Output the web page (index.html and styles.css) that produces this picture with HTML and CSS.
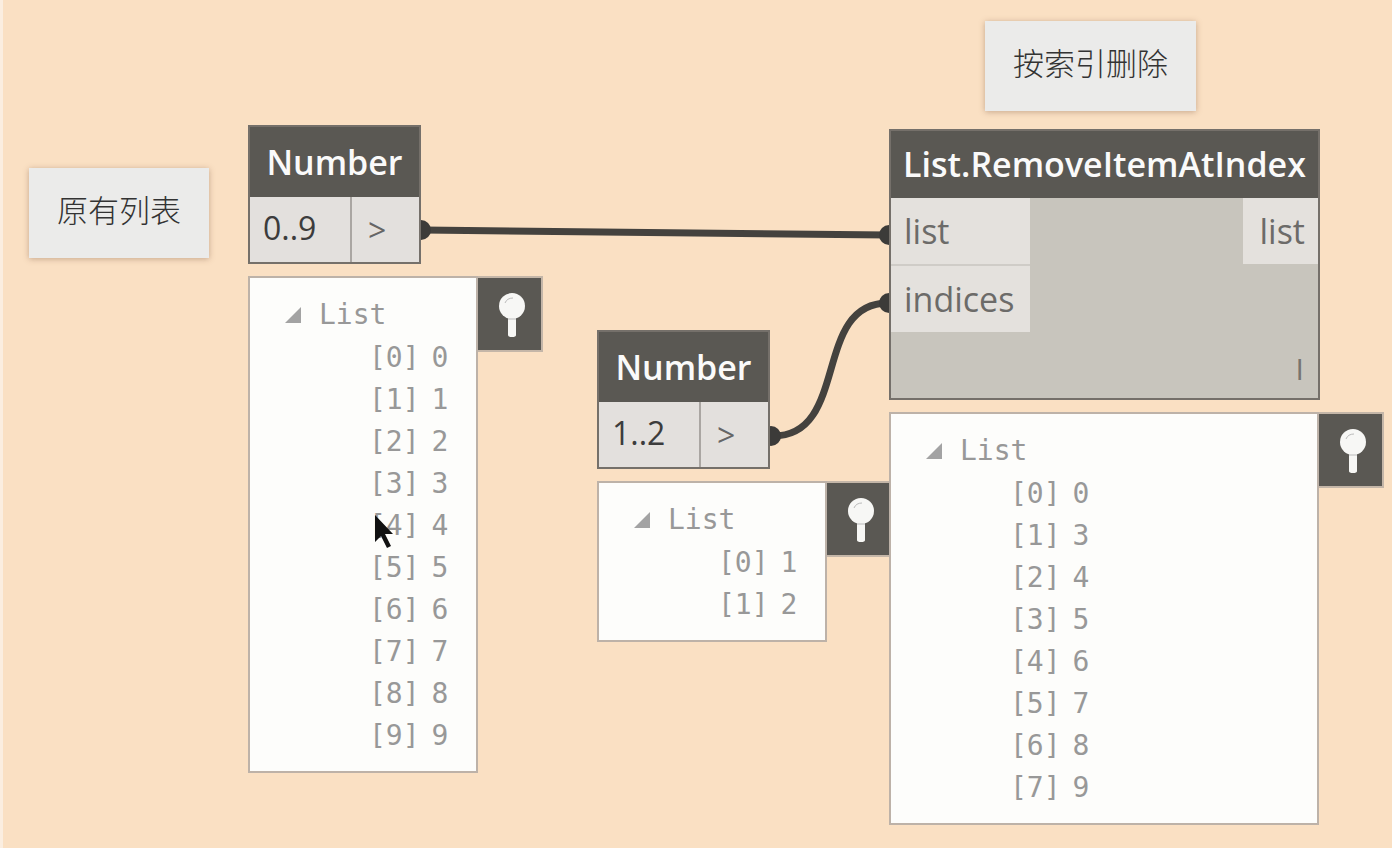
FILE: index.html
```html
<!DOCTYPE html>
<html lang="zh-CN">
<head>
<meta charset="utf-8">
<title>List.RemoveItemAtIndex</title>
<link rel="stylesheet" href="styles.css">
</head>
<body>
<main class="canvas">
  <svg class="wires" aria-hidden="true">
    <path d="M423 230 L888 235"/>
    <path d="M773 436 C850 436 812 303 888 303"/>
    <circle cx="421" cy="230" r="10"/>
    <circle cx="771" cy="436" r="10"/>
    <circle cx="889" cy="235" r="10"/>
    <circle cx="889" cy="303" r="10"/>
  </svg>

  <p class="note note-source">原有列表</p>
  <p class="note note-remove">按索引删除</p>

  <section class="item item-range">
    <div class="node">
      <h2 class="title">Number</h2>
      <div class="row">
        <input class="value" type="text" value="0..9" aria-label="Number">
        <span class="out">&gt;</span>
      </div>
    </div>
    <div class="preview">
      <div class="panel">
        <button class="toggle" type="button"><svg class="arrow" viewBox="0 0 18 17" aria-hidden="true"><path d="M17 0V16H1Z"/></svg>List</button>
        <ul class="values">
          <li><span>[0]</span><span>0</span></li>
          <li><span>[1]</span><span>1</span></li>
          <li><span>[2]</span><span>2</span></li>
          <li><span>[3]</span><span>3</span></li>
          <li><span>[4]</span><span>4</span></li>
          <li><span>[5]</span><span>5</span></li>
          <li><span>[6]</span><span>6</span></li>
          <li><span>[7]</span><span>7</span></li>
          <li><span>[8]</span><span>8</span></li>
          <li><span>[9]</span><span>9</span></li>
        </ul>
      </div>
      <button class="pin" type="button" aria-label="Pin"><svg viewBox="0 0 28 46" aria-hidden="true"><circle cx="14" cy="13" r="13"/><path d="M10 25H18V42Q18 44 14 44Q10 44 10 42Z"/><path class="glint" d="M7 10Q9 5 15 5"/><path class="glint" d="M10 26H18"/></svg></button>
    </div>
  </section>

  <section class="item item-indices">
    <div class="node">
      <h2 class="title">Number</h2>
      <div class="row">
        <input class="value" type="text" value="1..2" aria-label="Number">
        <span class="out">&gt;</span>
      </div>
    </div>
    <div class="preview">
      <div class="panel">
        <button class="toggle" type="button"><svg class="arrow" viewBox="0 0 18 17" aria-hidden="true"><path d="M17 0V16H1Z"/></svg>List</button>
        <ul class="values">
          <li><span>[0]</span><span>1</span></li>
          <li><span>[1]</span><span>2</span></li>
        </ul>
      </div>
      <button class="pin" type="button" aria-label="Pin"><svg viewBox="0 0 28 46" aria-hidden="true"><circle cx="14" cy="13" r="13"/><path d="M10 25H18V42Q18 44 14 44Q10 44 10 42Z"/><path class="glint" d="M7 10Q9 5 15 5"/><path class="glint" d="M10 26H18"/></svg></button>
    </div>
  </section>

  <section class="item item-result">
    <div class="node node-wide">
      <h2 class="title">List.RemoveItemAtIndex</h2>
      <div class="ports">
        <div class="inputs">
          <span class="port">list</span>
          <span class="port">indices</span>
        </div>
        <span class="port port-out">list</span>
      </div>
      <div class="lacing">I</div>
    </div>
    <div class="preview">
      <div class="panel panel-wide">
        <button class="toggle" type="button"><svg class="arrow" viewBox="0 0 18 17" aria-hidden="true"><path d="M17 0V16H1Z"/></svg>List</button>
        <ul class="values">
          <li><span>[0]</span><span>0</span></li>
          <li><span>[1]</span><span>3</span></li>
          <li><span>[2]</span><span>4</span></li>
          <li><span>[3]</span><span>5</span></li>
          <li><span>[4]</span><span>6</span></li>
          <li><span>[5]</span><span>7</span></li>
          <li><span>[6]</span><span>8</span></li>
          <li><span>[7]</span><span>9</span></li>
        </ul>
      </div>
      <button class="pin" type="button" aria-label="Pin"><svg viewBox="0 0 28 46" aria-hidden="true"><circle cx="14" cy="13" r="13"/><path d="M10 25H18V42Q18 44 14 44Q10 44 10 42Z"/><path class="glint" d="M7 10Q9 5 15 5"/><path class="glint" d="M10 26H18"/></svg></button>
    </div>
  </section>

  <svg class="pointer" viewBox="0 0 20 36" aria-hidden="true"><path d="M1 1V28L7 22L13 34L17 32L11 20H19Z"/></svg>
</main>
</body>
</html>
```

FILE: styles.css
```css
* {
  box-sizing: border-box;
}

body {
  margin: 0;
  background: #fae0c3;
  color: #3c3c3c;
  font-family: "Open Sans", "Noto Sans CJK SC", sans-serif;
}

h2, p, ul {
  margin: 0;
  padding: 0;
}

.canvas {
  position: relative;
  min-height: 100vh;
  overflow: hidden;
  border-left: 3px solid #fbeee0;
}

.wires {
  position: absolute;
  top: 0;
  left: -3px;
  width: 100%;
  height: 100%;
}

.wires path {
  fill: none;
  stroke: #44423e;
  stroke-width: 7px;
}

.wires circle {
  fill: #3c3b39;
}

.note {
  position: absolute;
  padding: 16px 28px 24px;
  background: #ebebea;
  box-shadow: 0 1px 6px rgba(120, 80, 60, 0.4);
  color: #333;
  font-family: "Noto Sans CJK SC", sans-serif;
  font-size: 31px;
  font-weight: 300;
  line-height: 50px;
}

.note-source {
  left: 26px;
  top: 168px;
}

.note-remove {
  left: 982px;
  top: 21px;
}

.item {
  position: absolute;
  display: flex;
  flex-direction: column;
  align-items: flex-start;
  gap: 12px;
}

.item-range {
  left: 245px;
  top: 125px;
}

.item-indices {
  left: 594px;
  top: 330px;
}

.item-result {
  left: 886px;
  top: 129px;
}

.node {
  width: 173px;
  border: 2px solid #75706a;
  background: #e3e0dd;
}

.node-wide {
  width: 431px;
  background: #c8c5bd;
}

.title {
  background: #5a5853;
  color: #fafafa;
  font-size: 34px;
  font-weight: 600;
  line-height: 70px;
  text-align: center;
}

.node-wide .title {
  line-height: 67px;
}

.row {
  display: flex;
  height: 65px;
}

.value {
  width: 102px;
  padding: 0 0 4px 13px;
  border: 0;
  border-right: 2px solid #aaa6a2;
  background: transparent;
  color: #3c3c3c;
  font: 32px "Open Sans", sans-serif;
}

.out {
  padding-left: 16px;
  color: #666;
  font-size: 32px;
  line-height: 66px;
}

.ports {
  display: flex;
  justify-content: space-between;
  align-items: flex-start;
  color: #6c6b69;
  font-size: 34px;
}

.inputs {
  display: flex;
  flex-direction: column;
  gap: 2px;
  background: #cfccc7;
}

.port {
  padding: 0 16px 0 13px;
  background: #e4e1dd;
  line-height: 66px;
}

.port-out {
  padding: 0 13px 0 17px;
}

.lacing {
  padding: 16px 14px 8px;
  color: #77746f;
  font-size: 30px;
  line-height: 42px;
  text-align: right;
}

.preview {
  display: flex;
  align-items: flex-start;
}

.panel {
  width: 230px;
  padding: 15px 24px 14px 34px;
  border: 2px solid #bdb2a8;
  background: #fdfdfb;
  color: #989898;
  font: 28px/42px "DejaVu Sans Mono", monospace;
}

.panel-wide {
  width: 430px;
}

.toggle {
  display: flex;
  align-items: center;
  gap: 17px;
  height: 44px;
  padding: 0;
  border: 0;
  background: none;
  color: inherit;
  font: inherit;
}

.arrow {
  width: 18px;
  height: 17px;
  fill: #a3a3a3;
}

.values {
  padding-left: 85px;
  list-style: none;
}

.values li {
  display: flex;
  gap: 12px;
}

.pin {
  display: flex;
  justify-content: center;
  width: 65px;
  height: 76px;
  padding: 15px 0 0 5px;
  border: 2px solid #c4b6a8;
  border-left: 0;
  background: #5a5853;
}

.pin svg {
  width: 28px;
  height: 46px;
  fill: #f7f7f5;
}

.pin .glint {
  fill: none;
  stroke: #bbb;
  stroke-width: 1px;
}

.pointer {
  position: absolute;
  left: 371px;
  top: 514px;
  width: 20px;
  height: 36px;
  fill: #111;
}
```
